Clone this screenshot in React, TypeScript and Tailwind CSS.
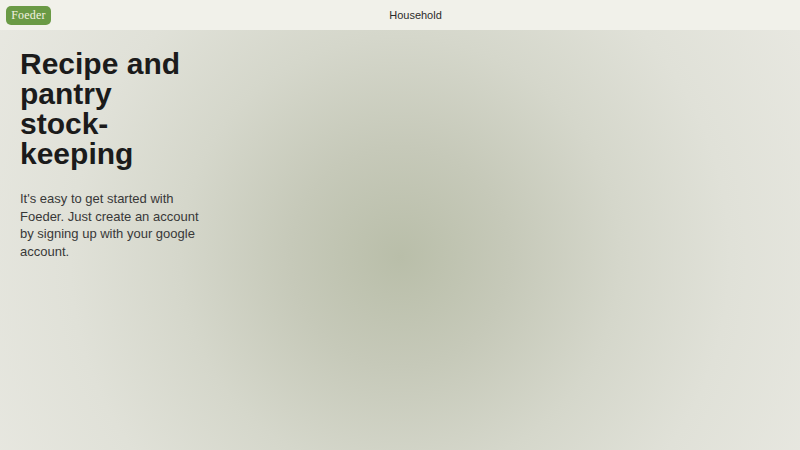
import React from 'react';

export default function App() {
  return (
    <div className="w-[800px] h-[450px] flex flex-col overflow-hidden font-['Liberation_Sans',Arial,sans-serif]">
      {/* Top bar */}
      <header className="h-[30px] shrink-0 flex items-center px-[6px] bg-[#f1f1ea]">
        <div className="h-[19px] w-[45px] rounded-[5px] bg-[#6a9a45] flex items-center justify-center text-[12px] text-[#f3f1e2] font-['Liberation_Serif',serif] tracking-[0.2px]">
          Foeder
        </div>
        <div className="flex-1 text-center pr-[14px] text-[11px] text-[#2b2b2b]">Household</div>
      </header>

      {/* Hero */}
      <main className="flex-1 bg-[radial-gradient(circle_at_50%_54%,#b9bea9_0px,#c6c9b9_110px,#d5d7cb_220px,#e0e1d8_330px,#e8e8e1_470px)]">
        <div className="w-[185px] ml-[20px] pt-[19px]">
          <h1 className="text-[30px] leading-[30px] font-bold text-[#1b1b1b]">Recipe and pantry stock-keeping</h1>
          <p className="mt-[21px] text-[13px] leading-[17.5px] text-[#383838]">
            It's easy to get started with Foeder. Just create an account by signing up with your google account.
          </p>
        </div>
      </main>
    </div>
  );
}
